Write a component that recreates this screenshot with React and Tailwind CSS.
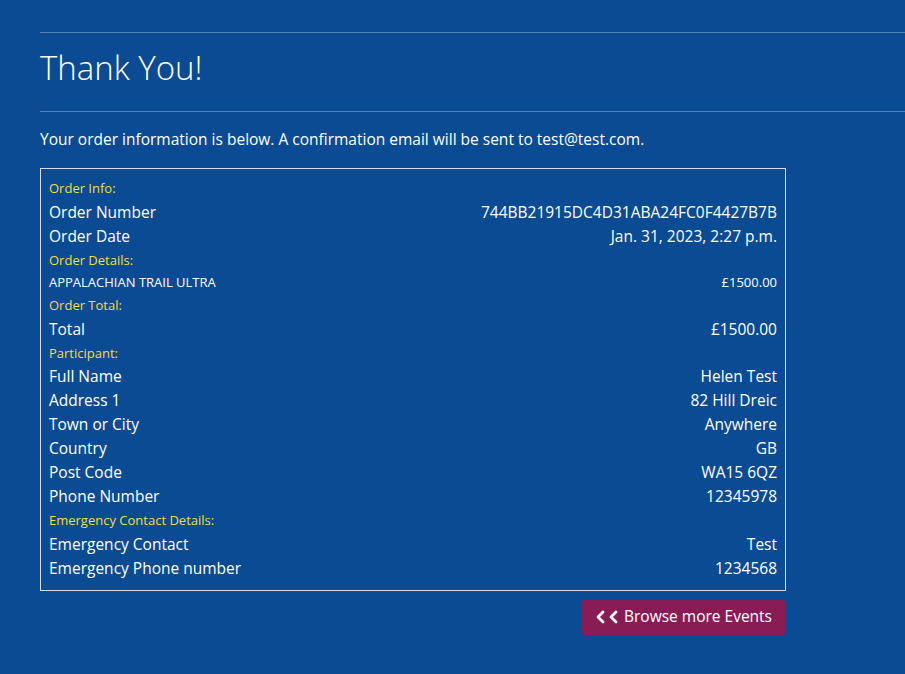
import React from "react";

const ROWS = [
  { type: "label", text: "Order Info:" },
  { type: "row", label: "Order Number", value: "744BB21915DC4D31ABA24FC0F4427B7B" },
  { type: "row", label: "Order Date", value: "Jan. 31, 2023, 2:27 p.m." },
  { type: "label", text: "Order Details:" },
  { type: "item", label: "APPALACHIAN TRAIL ULTRA", value: "£1500.00" },
  { type: "label", text: "Order Total:" },
  { type: "row", label: "Total", value: "£1500.00" },
  { type: "label", text: "Participant:" },
  { type: "row", label: "Full Name", value: "Helen Test" },
  { type: "row", label: "Address 1", value: "82 Hill Dreic" },
  { type: "row", label: "Town or City", value: "Anywhere" },
  { type: "row", label: "Country", value: "GB" },
  { type: "row", label: "Post Code", value: "WA15 6QZ" },
  { type: "row", label: "Phone Number", value: "12345978" },
  { type: "label", text: "Emergency Contact Details:" },
  { type: "row", label: "Emergency Contact", value: "Test" },
  { type: "row", label: "Emergency Phone number", value: "1234568" },
];

const Chevron = () => (
  <svg width="9" height="14" viewBox="0 0 9 14" fill="none" stroke="currentColor" strokeWidth="2.8" strokeLinecap="round" strokeLinejoin="round">
    <path d="M7 2 L2 7 L7 12" />
  </svg>
);

export default function App() {
  return (
    <div
      className="min-h-[674px] bg-[#0a4b93] text-white pl-10 pt-8"
      style={{ fontFamily: "'Open Sans', Lato, sans-serif" }}
    >
      <div className="border-t border-white/30" />
      <h1 className="text-[33px] leading-none font-light pt-[18px] pb-[27px]">Thank You!</h1>
      <div className="border-t border-white/30" />

      <p className="text-[15.5px] leading-6 mt-[15px]">
        Your order information is below. A confirmation email will be sent to test@test.com.
      </p>

      <div className="w-[746px] mt-[17px] border border-[#d8dde6] px-[8px] pt-[8px] pb-[9px]">
        {ROWS.map((r, i) =>
          r.type === "label" ? (
            <div key={i} className="h-[23.5px] flex items-end pb-[2px] text-[13px] text-[#f2df3a]">
              {r.text}
            </div>
          ) : r.type === "item" ? (
            <div key={i} className="h-[22px] flex items-center justify-between text-[13px]">
              <span>{r.label}</span>
              <span>{r.value}</span>
            </div>
          ) : (
            <div key={i} className="h-[24px] flex items-center justify-between text-[15.5px]">
              <span>{r.label}</span>
              <span>{r.value}</span>
            </div>
          )
        )}
      </div>

      <div className="w-[746px] flex justify-end mt-[9px]">
        <button className="h-[35px] pl-[14px] pr-[13px] mr-[1px] bg-[#8a1c55] rounded-[3px] flex items-center gap-[4px] text-[15.5px] text-white">
          <Chevron />
          <Chevron />
          <span className="ml-[2px]">Browse more Events</span>
        </button>
      </div>
    </div>
  );
}
